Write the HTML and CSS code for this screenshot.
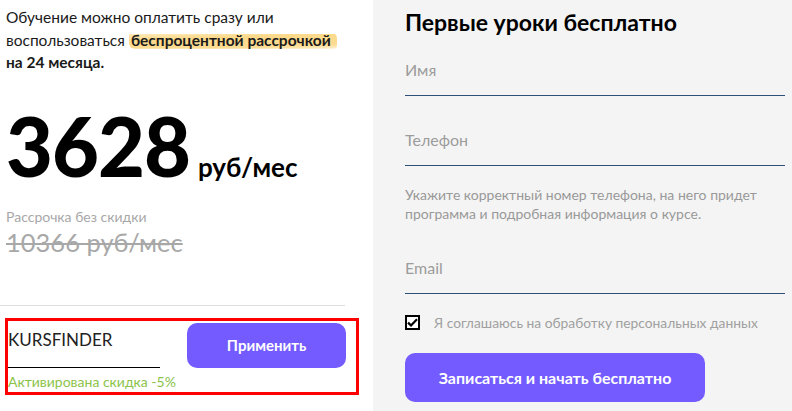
FILE: index.html
```html
<!DOCTYPE html>
<html lang="ru">
<head>
  <meta charset="UTF-8" />
  <meta name="viewport" content="width=device-width, initial-scale=1.0" />
  <title>Оплата курса</title>
  <link rel="stylesheet" href="styles.css">
</head>
<body>
  <div class="wrap">

    <!-- Левая колонка: цена и промокод -->
    <div class="price-col">
      <p class="intro">
        Обучение можно оплатить сразу или воспользоваться
        <b class="marker">беспроцентной рассрочкой</b>
        <b>на 24 месяца.</b>
      </p>

      <div class="price">
        <span class="price-num">3628</span>
        <span class="price-unit">руб/мес</span>
      </div>

      <div class="old-label">Рассрочка без скидки</div>
      <div class="old-price">10366 руб/мес</div>

      <hr class="sep">

      <div class="promo">
        <div class="promo-field">
          <div class="promo-input">KURSFINDER</div>
          <div class="promo-ok">Активирована скидка -5%</div>
        </div>
        <button class="btn btn-apply">Применить</button>
      </div>
    </div>

    <!-- Правая колонка: форма -->
    <div class="form-col">
      <h2>Первые уроки бесплатно</h2>

      <div class="field">Имя</div>
      <div class="field">Телефон</div>
      <p class="hint">Укажите корректный номер телефона, на него придет программа и подробная информация о курсе.</p>
      <div class="field field-email">Email</div>

      <label class="agree">
        <span class="check">
          <svg width="11" height="9" viewBox="0 0 11 9"><path d="M1 4.6 L4 7.4 L10 1.2" fill="none" stroke="#000" stroke-width="2.2"/></svg>
        </span>
        Я соглашаюсь на обработку персональных данных
      </label>

      <button class="btn btn-send">Записаться и начать бесплатно</button>
    </div>

  </div>
</body>
</html>
```

FILE: styles.css
```css
body {
  margin: 0;
  font-family: Lato, "Open Sans", sans-serif;
  background: #fff;
  color: #111;
}

.wrap {
  display: flex;
  height: 411px;
}

.price-col {
  width: 373px;
  padding: 6px 0 0 6px;
  box-sizing: border-box;
}

.intro {
  margin: 0;
  font-size: 15.5px;
  line-height: 22.5px;
  color: #1a1a1a;
  width: 350px;
}

.intro b {
  font-weight: 700;
}

.marker {
  background: linear-gradient(178deg, rgba(253, 217, 130, 0.55) 0%, #fcd98a 30%, #fddc93 80%, rgba(253, 217, 130, 0.4) 100%) no-repeat left bottom / 100% 82%;
  padding: 0 6px 0 2px;
  border-radius: 3px 8px 4px 6px;
}

.price {
  margin-top: 30px;
  display: flex;
  align-items: baseline;
}

.price-num {
  font-size: 81px;
  font-weight: 900;
  line-height: 84px;
  letter-spacing: -1px;
  color: #000;
}

.price-unit {
  margin-left: 8px;
  font-size: 26px;
  font-weight: 700;
  color: #000;
}

.old-label {
  margin-top: 20px;
  font-size: 14px;
  color: #a8a8a8;
}

.old-price {
  font-size: 25.5px;
  color: #a8a8a8;
  text-decoration: line-through;
  text-decoration-thickness: 2px;
  margin-top: 2px;
}

.sep {
  margin: 48px 0 0 -6px;
  width: 345px;
  border: none;
  border-top: 1px solid #dedede;
}

.promo {
  margin: 12px 0 0 -1px;
  width: 354px;
  height: 77px;
  box-sizing: border-box;
  border: 3px solid #ff0000;
  display: flex;
  gap: 27px;
  padding: 2px 10px 0 0;
}

.promo-field {
  width: 152px;
}

.promo-input {
  font-size: 17px;
  color: #222;
  height: 38px;
  padding-top: 6px;
  border-bottom: 1px solid #000;
}

.promo-ok {
  margin-top: 5px;
  font-size: 14px;
  color: #8bc34a;
  white-space: nowrap;
}

.btn {
  border: none;
  border-radius: 10px;
  background: #735bff;
  color: #fff;
  font-family: inherit;
  font-weight: 700;
  cursor: pointer;
}

.btn-apply {
  width: 160px;
  height: 45px;
  font-size: 15px;
}

.form-col {
  flex: 1;
  background: #f4f4f4;
  padding: 8px 7px 0 32px;
}

h2 {
  margin: 0;
  font-size: 23px;
  font-weight: 700;
  color: #000;
}

.field {
  margin-top: 22px;
  height: 38px;
  font-size: 16px;
  color: #9c9c9c;
  border-bottom: 1.5px solid #2f5078;
  padding-top: 2px;
  box-sizing: border-box;
}

.field + .field {
  margin-top: 32px;
}

.hint {
  margin: 19px 0 0;
  font-size: 14px;
  line-height: 19px;
  color: #999;
}

.field-email {
  margin-top: 33px;
}

.agree {
  display: flex;
  align-items: center;
  gap: 14px;
  margin-top: 20px;
  font-size: 13.8px;
  color: #a0a0a0;
}

.check {
  width: 15px;
  height: 15px;
  box-sizing: border-box;
  border: 2px solid #000;
  background: #fff;
  display: flex;
  align-items: center;
  justify-content: center;
}

.btn-send {
  margin-top: 22px;
  width: 300px;
  height: 49px;
  font-size: 16px;
}
```
